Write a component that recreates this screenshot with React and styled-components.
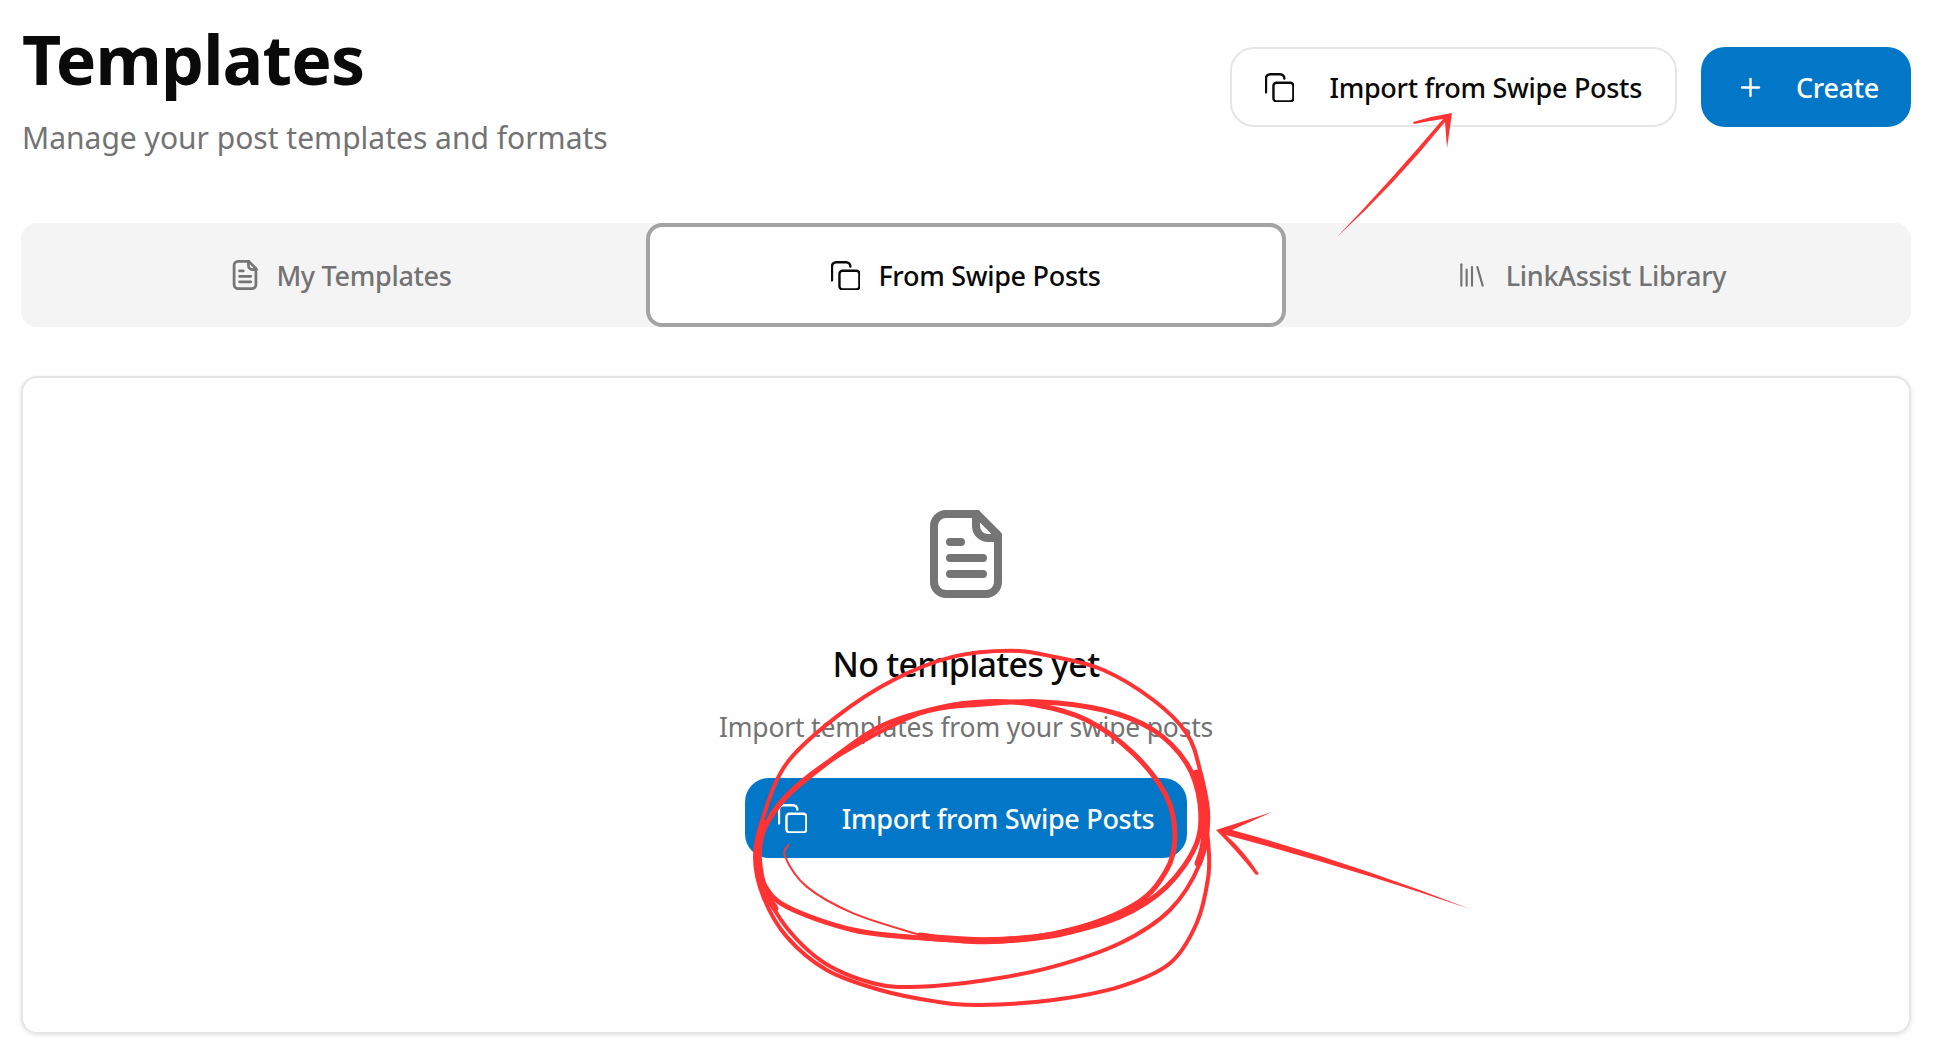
import React from 'react';
import styled, { createGlobalStyle } from 'styled-components';
import { Plus, Library } from 'lucide-react';

const GlobalStyle = createGlobalStyle`
  html, body {
    margin: 0;
    padding: 0;
    background: #fff;
    font-family: "Noto Sans", "Open Sans", sans-serif;
    color: #0a0a0a;
  }
  * { box-sizing: border-box; }
`;

const Page = styled.div`
  position: relative;
  width: 1934px;
  height: 1059px;
  overflow: hidden;
  padding: 0 23px 0 21px;
`;

const Header = styled.header`
  display: flex;
  justify-content: space-between;
  align-items: flex-start;
  height: 223px;
  padding-top: 47px;
`;

const TitleBlock = styled.div`
  margin-top: -33px;
  padding-left: 1px;
`;

const Title = styled.h1`
  margin: 0;
  font-size: 68px;
  line-height: 90px;
  font-weight: 700;
  letter-spacing: -0.8px;
`;

const Subtitle = styled.p`
  margin: 13px 0 0;
  font-size: 30px;
  line-height: 42px;
  color: #737373;
`;

const Actions = styled.div`
  display: flex;
  gap: 24px;
`;

const Button = styled.button`
  display: inline-flex;
  align-items: center;
  justify-content: center;
  gap: ${p => (p.$compact ? '31px' : '35px')};
  height: 80px;
  padding: ${p => (p.$compact ? '0 32px 0 35px' : '0 33px')};
  border-radius: 24px;
  border: ${p => (p.$primary ? 'none' : '2px solid #e5e5e5')};
  background: ${p => (p.$primary ? '#0277c8' : '#fff')};
  color: ${p => (p.$primary ? '#fff' : '#0a0a0a')};
  font-family: inherit;
  font-size: 27px;
  letter-spacing: -0.3px;
  font-weight: 500;
`;

const TabBar = styled.div`
  display: grid;
  grid-template-columns: 625px 640px 1fr;
  height: 104px;
  background: #f4f4f4;
  border-radius: 16px;
`;

const Tab = styled.div`
  display: flex;
  align-items: center;
  justify-content: center;
  gap: 18px;
  padding: ${p => p.$inset || '0'};
  font-size: 27px;
  letter-spacing: -0.3px;
  font-weight: 500;
  border-radius: 16px;
  color: ${p => (p.$active ? '#0a0a0a' : '#737373')};
  background: ${p => (p.$active ? '#fff' : 'transparent')};
  border: ${p => (p.$active ? '4px solid #a3a3a3' : 'none')};
`;

const Card = styled.section`
  margin-top: 49px;
  height: 658px;
  border: 2px solid #e5e5e5;
  border-radius: 16px;
  box-shadow: 0 1px 4px rgba(0, 0, 0, 0.12);
  display: flex;
  flex-direction: column;
  align-items: center;
  padding-top: 132px;
`;

const EmptyTitle = styled.h3`
  margin: 42px 0 0;
  font-size: 34px;
  line-height: 48px;
  font-weight: 500;
  letter-spacing: -0.75px;
`;

const EmptyText = styled.p`
  margin: 19px 0 0;
  font-size: 26.5px;
  line-height: 40px;
  letter-spacing: -0.2px;
  color: #737373;
`;

const EmptyAction = styled.div`
  margin-top: 31px;
`;

const Overlay = styled.svg`
  position: absolute;
  left: 0;
  top: 0;
  pointer-events: none;
`;

const CopyIcon = () => (
  <svg width="29" height="29" viewBox="0 0 24 24" fill="none" stroke="currentColor" strokeWidth="2" strokeLinecap="round" strokeLinejoin="round">
    <rect x="7" y="8" width="16.5" height="15.5" rx="2.5" />
    <path d="M.8 16V4.5A3.5 3.5 0 0 1 4.3 1H12.5a3.5 3.5 0 0 1 3.5 3.5" />
  </svg>
);

const DocIcon = ({ w, h }) => (
  <svg width={w} height={h} viewBox="0 0 72 88" fill="none" stroke="#757575" strokeWidth="8" strokeLinecap="round" strokeLinejoin="round">
    <path d="M16 4H47L68 25V72A12 12 0 0 1 56 84H16A12 12 0 0 1 4 72V16A12 12 0 0 1 16 4Z" />
    <path d="M46 3V16A12 12 0 0 0 58 28H70" />
    <path d="M20 32H31M20 48H53M20 64H53" />
  </svg>
);

// smooth line through hand-picked points, so the scribbles stay readable
const smooth = pts => {
  let d = `M${pts[0][0]} ${pts[0][1]}`;
  for (let i = 0; i < pts.length - 1; i++) {
    const p0 = pts[i - 1] || pts[i];
    const p1 = pts[i];
    const p2 = pts[i + 1];
    const p3 = pts[i + 2] || p2;
    const c1x = p1[0] + (p2[0] - p0[0]) / 6;
    const c1y = p1[1] + (p2[1] - p0[1]) / 6;
    const c2x = p2[0] - (p3[0] - p1[0]) / 6;
    const c2y = p2[1] - (p3[1] - p1[1]) / 6;
    d += `C${c1x} ${c1y} ${c2x} ${c2y} ${p2[0]} ${p2[1]}`;
  }
  return d;
};

const scribbles = [
  { w: 6, pts: [[205, 645], [195, 680], [260, 770], [400, 850], [600, 915]] },
  { w: 15, pts: [[600, 915], [800, 935], [1050, 900], [1250, 820], [1340, 720], [1365, 620], [1340, 500], [1240, 370], [1100, 270], [950, 225], [800, 215], [650, 235], [480, 290], [320, 400], [200, 500], [130, 600], [110, 680], [130, 760], [200, 830], [400, 900], [620, 925], [800, 930], [1000, 915], [1200, 860], [1340, 770], [1430, 640], [1440, 520], [1400, 400], [1300, 300], [1150, 240], [950, 215], [750, 225]] },
  { w: 12, pts: [[750, 225], [600, 250], [400, 350], [250, 450], [150, 560], [120, 690], [170, 850], [300, 990], [460, 1060], [600, 1070], [800, 1050], [1000, 1010], [1200, 940], [1350, 840], [1440, 700], [1465, 560], [1440, 420], [1400, 310], [1300, 210], [1150, 120], [1000, 80], [870, 62], [700, 80], [520, 150], [350, 260], [200, 400], [130, 560], [105, 680], [130, 800], [200, 920], [320, 1020], [480, 1080], [650, 1115], [780, 1125], [1000, 1110], [1200, 1070], [1350, 1000], [1430, 880], [1465, 740], [1465, 640], [1450, 520]] },
  // the pen went over these parts several times
  { w: 22, pts: [[1430, 430], [1455, 530], [1452, 640], [1435, 700]] },
  { w: 20, pts: [[620, 922], [800, 932], [1000, 915], [1150, 875]] },
  { w: 20, pts: [[130, 580], [112, 680], [128, 770], [165, 835]] },
];

const RED = '#ff3333';

const Annotations = () => (
  <Overlay width="1934" height="1059" viewBox="0 0 1934 1059" fill="none">
    <g transform="translate(720 630) scale(0.3333)" stroke={RED} strokeLinecap="round" strokeLinejoin="round">
      {scribbles.map((s, i) => (
        <path key={i} d={smooth(s.pts)} strokeWidth={s.w} />
      ))}
    </g>
    {/* arrow to the empty state button */}
    <path fill={RED} d="M1216 830L1272 812L1232 830Q1350 862 1470 909Q1350 868 1226 835Q1245 852 1259 874L1256 875Q1238 852 1216 830Z" />
    {/* arrow to the header button */}
    <path fill={RED} d="M1452 113L1447 148L1445 122Q1395 184 1337 237Q1393 178 1443 119Q1428 121 1414 124L1413 122Q1432 116 1452 113Z" />
  </Overlay>
);

export default function App() {
  return (
    <>
      <GlobalStyle />
      <Page>
        <Header>
          <TitleBlock>
            <Title>Templates</Title>
            <Subtitle>Manage your post templates and formats</Subtitle>
          </TitleBlock>
          <Actions>
            <Button>
              <CopyIcon />
              Import from Swipe Posts
            </Button>
            <Button $primary $compact>
              <Plus size={29} strokeWidth={2} />
              Create
            </Button>
          </Actions>
        </Header>
        <TabBar>
          <Tab $inset="0 0 0 17px">
            <DocIcon w={26} h={30} />
            My Templates
          </Tab>
          <Tab $active>
            <CopyIcon />
            From Swipe Posts
          </Tab>
          <Tab $inset="0 15px 0 0">
            <Library size={32} strokeWidth={1.6} />
            LinkAssist Library
          </Tab>
        </TabBar>
        <Card>
          <DocIcon w={72} h={88} />
          <EmptyTitle>No templates yet</EmptyTitle>
          <EmptyText>Import templates from your swipe posts</EmptyText>
          <EmptyAction>
            <Button $primary>
              <CopyIcon />
              Import from Swipe Posts
            </Button>
          </EmptyAction>
        </Card>
        <Annotations />
      </Page>
    </>
  );
}
